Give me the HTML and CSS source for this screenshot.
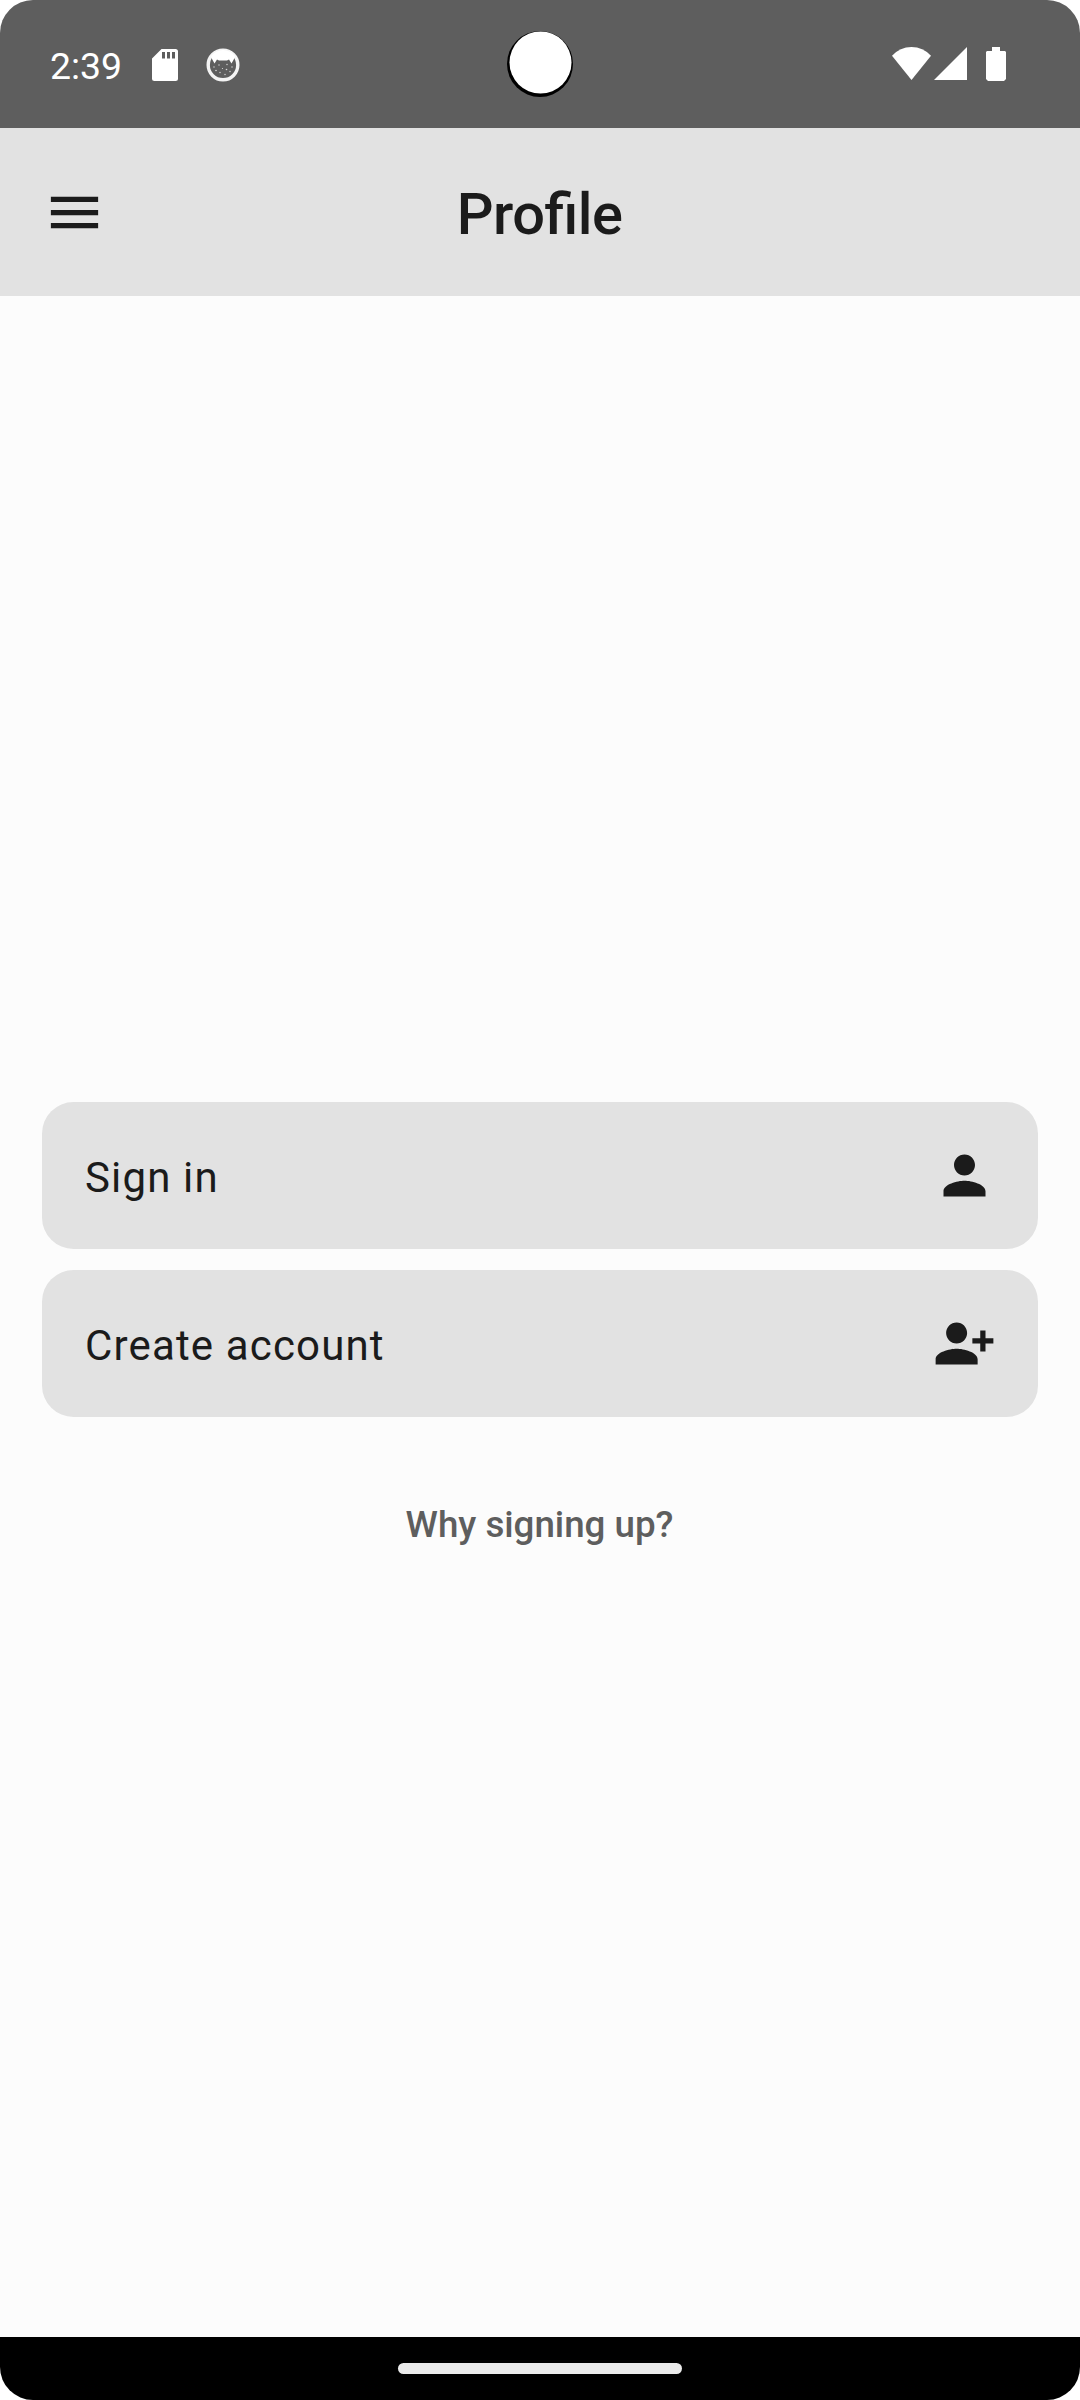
FILE: index.html
```html
<!DOCTYPE html>
<html lang="en">
<head>
<meta charset="utf-8">
<title>Profile</title>
<link rel="stylesheet" href="styles.css">
</head>
<body>
<div class="screen">
  <header class="status-bar">
    <div class="status-left">
      <span class="clock">2:39</span>
      <svg class="sd-icon" width="26" height="32" viewBox="0 0 26 32"><path fill="#fff" fill-rule="evenodd" d="M9.500 0H23.500Q26 0 26 2.500V29.500Q26 32 23.500 32H2.500Q0 32 0 29.500V9.500ZM10 3V9.500H13V3ZM15 3V9.500H18V3ZM20 3V9.500H23V3Z"/></svg>
      <svg class="app-icon" width="34" height="34" viewBox="0 0 34 34">
        <circle cx="17" cy="17" r="14.800" fill="none" stroke="#f4f4f4" stroke-width="3.400"/>
        <path fill="#fff" d="M5 8Q10 2 17 2T29 8L28 11L25.500 15.500L23 11.500L21 12.500H13L11 11.500L8.500 15.500L6 11Z"/>
        <g fill="#d8d8d8"><circle cx="8" cy="19" r=".7"/><circle cx="13" cy="17" r=".7"/><circle cx="21" cy="16.500" r=".7"/><circle cx="26" cy="19" r=".7"/><circle cx="10" cy="22.500" r=".8"/><circle cx="16.500" cy="20.500" r=".6"/><circle cx="20.500" cy="21.500" r=".8"/><circle cx="14" cy="24.500" r=".7"/><circle cx="19" cy="26.500" r=".7"/><circle cx="24" cy="23.500" r=".7"/></g>
      </svg>
    </div>
    <svg class="camera" width="68" height="68" viewBox="0 0 68 68"><circle cx="33" cy="33" r="33"/><circle cx="33.500" cy="31.500" r="31" fill="#fff"/></svg>
    <div class="status-right">
      <svg width="39" height="33" viewBox="0 0 39 33"><path fill="#fff" d="M0 8.800Q8 0 19.500 0T39 8.800L19.500 33Z"/></svg>
      <svg class="signal" width="33" height="33" viewBox="0 0 33 33"><path fill="#fff" d="M33 0V33H0Z"/></svg>
      <svg class="battery" width="20" height="34" viewBox="0 0 20 34"><path fill="#fff" d="M6 0H14V4H19L20 5V32L18 34H2L0 32V5L1 4H6Z"/></svg>
    </div>
  </header>
  <div class="app-bar">
    <svg class="menu" width="63" height="63" viewBox="0 0 24 24"><path d="M3 18h18v-2H3zm0-5h18v-2H3zm0-7v2h18V6z"/></svg>
    <h1 class="title">Profile</h1>
  </div>
  <main class="content">
    <div class="card"><span class="label">Sign in</span>
      <svg width="63" height="63" viewBox="0 0 24 24"><path d="M12 12c2.210 0 4-1.790 4-4s-1.790-4-4-4-4 1.790-4 4 1.790 4 4 4zm0 2c-2.670 0-8 1.340-8 4v2h16v-2c0-2.660-5.330-4-8-4z"/></svg>
    </div>
    <div class="card"><span class="label">Create account</span>
      <svg width="63" height="63" viewBox="0 0 24 24"><path d="M13 8c0-2.210-1.790-4-4-4S5 5.790 5 8s1.790 4 4 4 4-1.790 4-4zm2 2v2h3v3h2v-3h3v-2h-3V7h-2v3zM1 18v2h16v-2c0-2.660-5.330-4-8-4s-8 1.340-8 4z"/></svg>
    </div>
    <a class="why">Why signing up?</a>
  </main>
  <footer class="nav-bar"><div class="handle"></div></footer>
</div>
</body>
</html>
```

FILE: styles.css
```css
* { box-sizing: border-box; }
body { margin: 0; background: #fff; font-family: Roboto, sans-serif; color: #1b1b1b; }
svg { display: block; flex: none; }
.screen { width: 1080px; height: 2400px; display: flex; flex-direction: column; overflow: hidden; border-radius: 33px; background: #fcfcfc; }
.status-bar { height: 128px; display: grid; grid-template-columns: 1fr 68px 1fr; background: #5e5e5e; color: #fff; }
.status-left { display: flex; align-items: flex-start; padding-left: 50px; }
.clock { width: 102px; padding-top: 45px; font-size: 37.4px; line-height: 43px; }
.sd-icon { margin-top: 49px; }
.app-icon { margin: 48px 0 0 28px; }
.camera { margin: 31px 0 0 1px; }
.status-right { display: flex; justify-content: flex-end; padding: 47px 74px 0 0; }
.signal { margin-left: 3px; }
.battery { margin-left: 19px; }
.app-bar { height: 168px; display: grid; grid-template-columns: 106px 1fr 106px; align-items: center; background: #e2e2e2; fill: #1b1b1b; }
.menu { margin-left: 43px; }
.title { margin: 0; padding: 3px 1px 0 0; text-align: center; font-size: 57.75px; line-height: 74px; font-weight: 500; letter-spacing: -.5px; font-feature-settings: "liga" 1; }
.content { flex: 1; display: flex; flex-direction: column; gap: 21px; padding: 806px 42px 0; }
.card { height: 147px; display: flex; align-items: center; justify-content: space-between; padding: 0 42px 0 43px; border-radius: 31.5px; background: #e2e2e2; fill: #1b1b1b; }
.label { padding-top: 4px; font-size: 42px; line-height: 63px; letter-spacing: 1.15px; }
.why { align-self: center; margin-top: 61px; padding-right: 1px; font-size: 36.75px; line-height: 52px; font-weight: 500; letter-spacing: -.03px; color: #5e5e5e; }
.nav-bar { height: 63px; display: flex; justify-content: center; padding-top: 26px; background: #000; }
.handle { width: 284px; height: 11px; border-radius: 5.5px; background: #ebebeb; }
```
